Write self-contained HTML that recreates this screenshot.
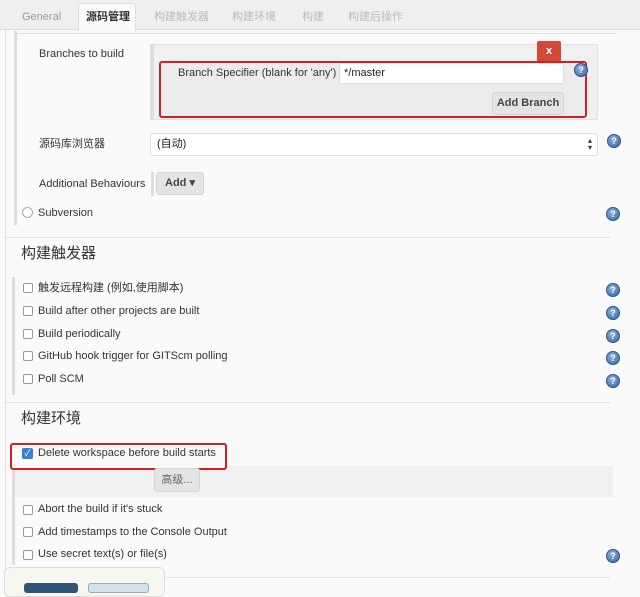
<!DOCTYPE html>
<html><head><meta charset="utf-8"><style>
*{margin:0;padding:0;box-sizing:border-box}
body{width:640px;height:586px;overflow:hidden;background:#fafafa;font-family:"Liberation Sans","Noto Sans CJK SC",sans-serif;font-size:11px;color:#333;position:relative}
.a{position:absolute}
.t{position:absolute;white-space:nowrap;line-height:13px}
.help{position:absolute;width:14px;height:14px;border-radius:50%;background:radial-gradient(circle at 40% 35%,#8fb3dc,#2f64a8);border:1px solid #2a5590;color:#fff;font-size:9px;font-weight:bold;text-align:center;line-height:12px}
.cb{position:absolute;width:10px;height:10px;border:1px solid #999;border-radius:2px;background:#fff}
.cn{font-family:"Liberation Sans","Noto Sans CJK SC",sans-serif}
.btn{position:absolute;background:#e4e4e4;border:1px solid #d6d6d6;border-radius:3px;font-weight:bold;color:#444;text-align:center}
</style></head><body>
<div class="a" style="left:0;top:0;width:640px;height:30px;background:#efefef;border-bottom:1px solid #ddd"></div>
<div class="a" style="left:78px;top:3px;width:58px;height:28px;background:#fafafa;border:1px solid #ddd;border-bottom:none;border-radius:3px 3px 0 0"></div>
<div class="t" style="left:22px;top:11px;color:#999">General</div>
<div class="t cn" style="left:86px;top:11px;font-weight:bold;color:#333">源码管理</div>
<div class="t cn" style="left:154px;top:11px;color:#bbb">构建触发器</div>
<div class="t cn" style="left:232px;top:11px;color:#bbb">构建环境</div>
<div class="t cn" style="left:302px;top:11px;color:#bbb">构建</div>
<div class="t cn" style="left:348px;top:11px;color:#bbb">构建后操作</div>
<div class="a" style="left:5px;top:30px;width:1px;height:556px;background:#ddd"></div>
<div class="a" style="left:14px;top:31px;width:3px;height:194px;background:#ddd"></div>
<div class="a" style="left:17px;top:31px;width:600px;height:3px;border-bottom:1px solid #ddd"></div>

<div class="t" style="left:39px;top:48px">Branches to build</div>
<div class="a" style="left:150px;top:44px;width:448px;height:76px;background:#f0f0f0;border:1px solid #e2e2e2"></div>
<div class="a" style="left:150px;top:44px;width:4px;height:76px;background:#ddd"></div>
<div class="a" style="left:537px;top:41px;width:24px;height:21px;background:#d24939;color:#fff;font-weight:bold;text-align:center;line-height:21px;border-radius:2px">x</div>
<div class="a" style="left:159px;top:61px;width:428px;height:57px;border:2px solid #d0202a;border-radius:3px;background:#ececec"></div>
<div class="t" style="left:178px;top:67px">Branch Specifier (blank for 'any')</div>
<div class="a" style="left:339px;top:63px;width:225px;height:21px;background:#fff;border:1px solid #ddd;border-radius:2px"></div>
<div class="t" style="left:344px;top:67px;color:#222">*/master</div>
<div class="help" style="left:574px;top:63px">?</div>
<div class="btn" style="left:492px;top:92px;width:72px;height:23px;line-height:21px">Add Branch</div>

<div class="t cn" style="left:39px;top:138px">源码库浏览器</div>
<div class="a" style="left:150px;top:133px;width:448px;height:23px;background:#fff;border:1px solid #ddd;border-radius:3px"></div>
<div class="t cn" style="left:157px;top:138px;color:#222">(自动)</div>
<div class="t" style="left:588px;top:137px;font-size:8px;line-height:7px">▴<br>▾</div>
<div class="help" style="left:607px;top:134px">?</div>

<div class="t" style="left:39px;top:178px">Additional Behaviours</div>
<div class="a" style="left:151px;top:172px;width:3px;height:24px;background:#ddd"></div>
<div class="btn" style="left:156px;top:172px;width:48px;height:23px;line-height:21px">Add ▾</div>

<div class="a" style="left:22px;top:207px;width:11px;height:11px;border:1px solid #aaa;border-radius:50%;background:#fff"></div>
<div class="t" style="left:38px;top:207px">Subversion</div>
<div class="help" style="left:606px;top:207px">?</div>
<div class="a" style="left:6px;top:237px;width:604px;height:1px;background:#e3e3e3"></div>

<div class="t cn" style="left:21px;top:245px;font-size:15px;line-height:18px;color:#333">构建触发器</div>
<div class="a" style="left:12px;top:277px;width:3px;height:118px;background:#ddd"></div>
<div class="cb" style="left:23px;top:283px"></div><div class="t cn" style="left:38px;top:282px">触发远程构建 (例如,使用脚本)</div><div class="help" style="left:606px;top:283px">?</div>
<div class="cb" style="left:23px;top:306px"></div><div class="t" style="left:38px;top:305px">Build after other projects are built</div><div class="help" style="left:606px;top:306px">?</div>
<div class="cb" style="left:23px;top:329px"></div><div class="t" style="left:38px;top:328px">Build periodically</div><div class="help" style="left:606px;top:329px">?</div>
<div class="cb" style="left:23px;top:351px"></div><div class="t" style="left:38px;top:350px">GitHub hook trigger for GITScm polling</div><div class="help" style="left:606px;top:351px">?</div>
<div class="cb" style="left:23px;top:374px"></div><div class="t" style="left:38px;top:373px">Poll SCM</div><div class="help" style="left:606px;top:374px">?</div>
<div class="a" style="left:6px;top:402px;width:604px;height:1px;background:#e3e3e3"></div>

<div class="t cn" style="left:21px;top:410px;font-size:15px;line-height:18px;color:#333">构建环境</div>
<div class="a" style="left:12px;top:465px;width:3px;height:100px;background:#ddd"></div>
<div class="a" style="left:15px;top:466px;width:598px;height:31px;background:#f0f0f0"></div>
<div class="a" style="left:10px;top:443px;width:217px;height:27px;border:2px solid #d0202a;border-radius:3px;background:#fafafa"></div>
<div class="a" style="left:22px;top:448px;width:11px;height:11px;border-radius:2px;background:#3a7fd5;color:#fff;font-size:9px;line-height:11px;text-align:center">✓</div>
<div class="t" style="left:38px;top:447px">Delete workspace before build starts</div>
<div class="btn cn" style="left:154px;top:468px;width:46px;height:24px;line-height:22px;font-weight:normal;color:#666">高级...</div>
<div class="cb" style="left:23px;top:505px"></div><div class="t" style="left:38px;top:503px">Abort the build if it's stuck</div>
<div class="cb" style="left:23px;top:527px"></div><div class="t" style="left:38px;top:526px">Add timestamps to the Console Output</div>
<div class="cb" style="left:23px;top:550px"></div><div class="t" style="left:38px;top:548px">Use secret text(s) or file(s)</div><div class="help" style="left:606px;top:549px">?</div>
<div class="a" style="left:6px;top:577px;width:604px;height:1px;background:#e3e3e3"></div>

<div class="a" style="left:4px;top:567px;width:161px;height:30px;background:#f6f7ee;border:1px solid #ddd;border-radius:6px"></div>
<div class="a" style="left:24px;top:583px;width:54px;height:10px;background:#2f5677;border-radius:3px"></div>
<div class="a" style="left:88px;top:583px;width:61px;height:10px;background:#d3e1ef;border:1px solid #9ab;border-radius:3px"></div>
</body></html>
